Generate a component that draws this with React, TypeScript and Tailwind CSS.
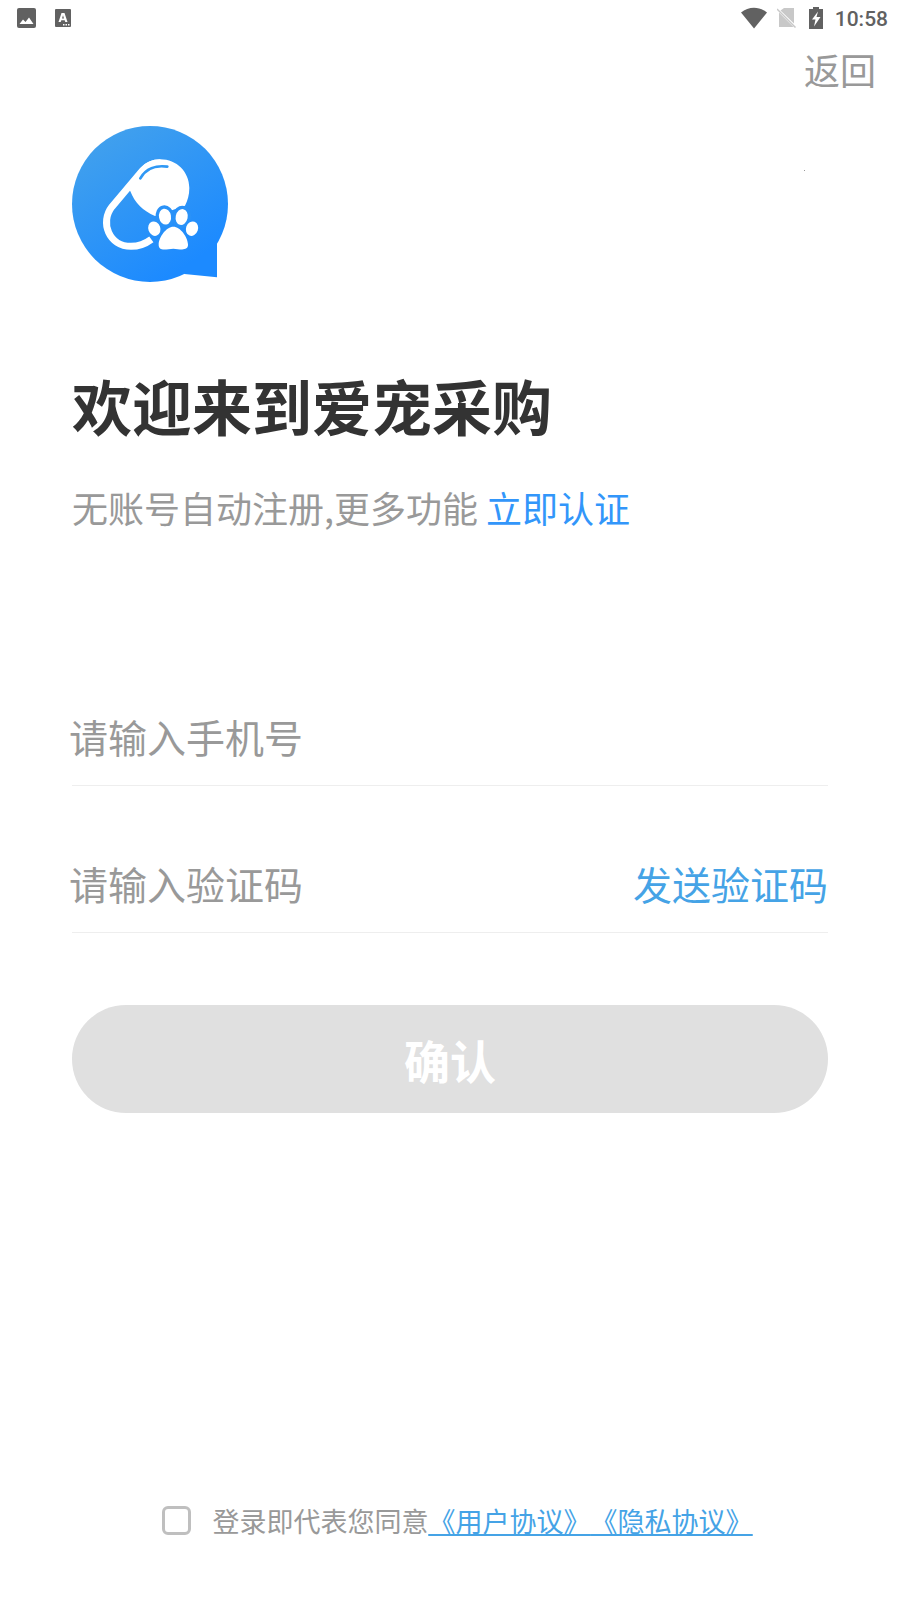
function Logo() {
  return (
    <svg viewBox="36 33 468 468" className="size-39" role="img" aria-label="爱宠采购">
      <defs>
        <linearGradient id="bubble" gradientUnits="userSpaceOnUse" x1="110" y1="100" x2="350" y2="470">
          <stop offset="0" stopColor="#3f9fee" />
          <stop offset="1" stopColor="#1c8aff" />
        </linearGradient>
      </defs>
      <g fill="url(#bubble)">
        <circle cx="270" cy="267" r="234" />
        <path d="M471 385L471 487L373 477L300 300Z" />
      </g>
      <path
        d="M301 143C279 143 262 151 248 166L156 275C119 322 147 394 213 394C238 394 254 388 274 373"
        fill="none"
        stroke="#fff"
        strokeWidth="21"
      />
      <path
        d="M200 216L241 160C257 142 277 133 301 133C350 133 388 171 388 219C388 240 383 256 375 272L340 284L285 303C249 288 224 263 211 229Z"
        fill="#fff"
      />
      <path
        d="M241 190C257 161 288 150 322 155"
        fill="none"
        stroke="#2f98f5"
        strokeWidth="8"
        strokeLinecap="round"
      />
      <g fill="#fff" stroke="#2a92f8" strokeWidth="20" paintOrder="stroke">
        <ellipse cx="315" cy="305" rx="18" ry="24" transform="rotate(-10 315 305)" />
        <ellipse cx="365" cy="306" rx="18" ry="24" transform="rotate(12 365 306)" />
      </g>
      <g fill="#fff">
        <ellipse cx="283" cy="341" rx="18" ry="22" transform="rotate(-20 283 341)" />
        <ellipse cx="396" cy="341" rx="18" ry="22" transform="rotate(20 396 341)" />
        <path d="M340 335C361 335 383 366 384 388C385 410 359 402 340 401C320 402 295 411 296 388C297 366 319 335 340 335Z" />
      </g>
    </svg>
  );
}

function StatusBar() {
  return (
    <header className="flex h-9 items-center justify-between pr-3 pl-4 text-[#616161]">
      <div className="flex items-center gap-4">
        <svg viewBox="0 0 20 20" className="size-5" aria-hidden="true">
          <rect x="1" y="0" width="19" height="20" rx="2" fill="currentColor" />
          <path d="M3.500 16L7 11.500L9.500 14L13 9.500L17.500 16Z" fill="#fff" />
        </svg>
        <svg viewBox="0 0 20 20" className="size-5" aria-hidden="true">
          <rect x="3" y="1" width="16" height="18" rx="1" fill="currentColor" />
          <path
            fillRule="evenodd"
            d="M9.500 5H12.500L15.500 14H13.300L12.700 12.300H9.300L8.700 14H6.500ZM11 7.300L10 10.500H12Z"
            fill="#fff"
          />
          <path d="M11 16h1.500v1.500h-1.500zM13.500 16h1.500v1.500h-1.500zM16 16h1.500v1.500h-1.500z" fill="#fff" />
        </svg>
      </div>
      <div className="flex items-center">
        <svg viewBox="0 0 26 22" className="mr-2.5 h-[22px] w-[26px]" aria-hidden="true">
          <path d="M0 5.500C7.500-.8 18.500-.8 26 5.500L13 21.500Z" fill="currentColor" />
        </svg>
        <svg viewBox="0 0 20 20" className="mr-3 size-5" aria-hidden="true">
          <path d="M7 0H17V15.500L3.500 2.500Z" fill="#c8c8c8" />
          <path d="M2 4.500L16.500 19H2Z" fill="#c8c8c8" />
          <path d="M0 1L18.500 19.500" stroke="#c8c8c8" strokeWidth="1.500" />
        </svg>
        <svg viewBox="0 0 14 22" className="mr-3 h-[22px] w-[14px]" aria-hidden="true">
          <path d="M4 0H10V2H14V22H0V2H4Z" fill="currentColor" />
          <path d="M9 4.500L3 12.500H6.500L5 19.500L11.500 10H7.500Z" fill="#fff" />
        </svg>
        <time className="pt-0.5 font-[Roboto,sans-serif] text-[21px] leading-8 font-medium">10:58</time>
      </div>
    </header>
  );
}

export default function App() {
  return (
    <div className="flex min-h-screen flex-col bg-white font-['Noto_Sans_CJK_SC',sans-serif] text-[#999]">
      <StatusBar />
      <nav className="flex h-[90px] justify-end px-6 pt-1.5">
        <button type="button" className="h-[54px] text-4xl">返回</button>
      </nav>

      <main className="px-[72px]">
        <div className="flex items-start justify-between">
          <Logo />
          <span className="mt-11 mr-[23px] size-px bg-[#999]" />
        </div>
        <h1 className="mt-[78px] text-[60px] leading-[90px] font-bold text-[#333]">欢迎来到爱宠采购</h1>
        <p className="mt-[30px] text-4xl leading-[54px]">
          无账号自动注册,更多功能{" "}
          <a href="#verify" className="text-[#3296fa]">立即认证</a>
        </p>

        <form className="mt-[154px]" onSubmit={(event) => event.preventDefault()}>
          <div className="flex h-[98px] items-center border-b border-[#eee]">
            <input
              type="tel"
              aria-label="手机号"
              placeholder="请输入手机号"
              className="-ml-[3px] h-16 min-w-0 flex-1 pb-0.5 text-[39px] outline-none placeholder:text-[#999]"
            />
          </div>
          <div className="mt-[49px] flex h-[98px] items-center border-b border-[#eee]">
            <input
              type="text"
              aria-label="验证码"
              placeholder="请输入验证码"
              className="-ml-[3px] h-16 min-w-0 flex-1 pb-0.5 text-[39px] outline-none placeholder:text-[#999]"
            />
            <button type="button" className="h-16 shrink-0 text-[39px] text-[#45a3e6]">发送验证码</button>
          </div>
          <button
            type="submit"
            className="mt-[72px] h-[108px] w-full rounded-full bg-[#e0e0e0] text-[46px] font-bold text-white"
          >
            确认
          </button>
        </form>
      </main>

      <footer className="mt-auto flex items-center justify-center pb-[59px] pl-3.5 text-[27px] leading-10 [text-spacing-trim:space-all]">
        <input
          id="agree"
          type="checkbox"
          className="mr-[22px] mb-0.5 size-[29px] appearance-none rounded-md border-3 border-[#bfbfbf] bg-white checked:bg-[#45a3e6]"
        />
        <label htmlFor="agree">登录即代表您同意</label>
        <span className="text-[#45a3e6] underline decoration-2 underline-offset-2">
          <a href="#terms">《用户协议》</a>
          <a href="#privacy">《隐私协议》</a>
        </span>
      </footer>
    </div>
  );
}
